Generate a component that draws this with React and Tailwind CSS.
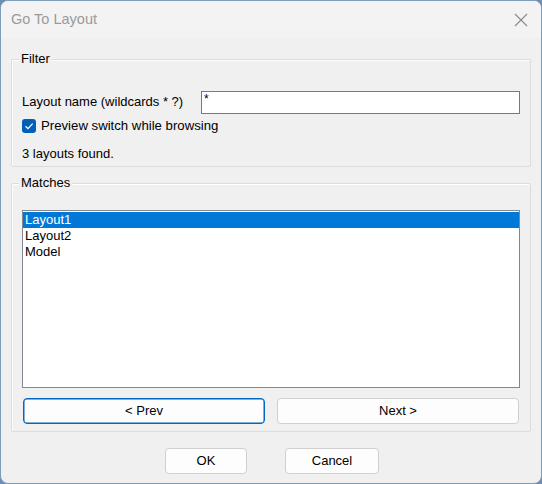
import React, { useState } from 'react';

const items = ['Layout1', 'Layout2', 'Model'];

const GroupBox = ({ label, className, children }) => (
  <div className={`relative border border-[#dcdcdc] rounded-[2px] shadow-[inset_1px_1px_0_#fff] ${className}`}>
    <span className="absolute left-[7px] -top-[9px] px-[2px] bg-[#f0f0f0] leading-[16px]">{label}</span>
    {children}
  </div>
);

const Button = ({ children, focused, className }) => (
  <button
    className={`h-[26px] rounded-[4px] bg-[#fdfdfd] text-[13px] text-black border ${
      focused ? 'border-[#0067c0] shadow-[inset_0_0_0_0.5px_#0067c0]' : 'border-[#d0d0d0]'
    } ${className}`}
  >
    {children}
  </button>
);

export default function App() {
  const [selected, setSelected] = useState(0);

  return (
    <div className="w-[542px] h-[484px] bg-[#6d8eb0] font-['Liberation_Sans',Arial,sans-serif] text-[13px] text-black">
      <div className="w-full h-full rounded-[8px] border border-[#7f9cba] bg-[#f0f0f0] flex flex-col overflow-hidden">
        {/* title bar */}
        <div className="h-[37px] flex items-center justify-between pl-[10px] pr-[13px] bg-[#f3f3f3]">
          <span className="text-[14.5px] text-[#9a9a9a] pt-[1px]">Go To Layout</span>
          <svg width="14" height="14" viewBox="0 0 14 14" className="text-[#8a8a8a]">
            <path d="M1 1 L13 13 M13 1 L1 13" stroke="currentColor" strokeWidth="1.1" fill="none" />
          </svg>
        </div>

        <div className="px-[10px] pt-[21px]">
          <GroupBox label="Filter" className="h-[108px] px-[10px] pt-[31px]">
            <div className="flex items-center h-[22px]">
              <span className="w-[179px]">Layout name (wildcards * ?)</span>
              <div className="flex-1 h-[23px] bg-white border border-[#7a7a7a] pl-[2px] leading-[14px] text-[12px]">*</div>
            </div>
            <label className="flex items-center mt-[5px] h-[16px]">
              <span className="w-[14px] h-[14px] rounded-[3px] bg-[#005fb8] flex items-center justify-center">
                <svg width="10" height="10" viewBox="0 0 10 10">
                  <path d="M1.5 5.2 L4 7.6 L8.6 2.6" stroke="#fff" strokeWidth="1.3" fill="none" />
                </svg>
              </span>
              <span className="ml-[5px] text-[13.2px]">Preview switch while browsing</span>
            </label>
            <div className="mt-[10px]">3 layouts found.</div>
          </GroupBox>

          <GroupBox label="Matches" className="mt-[16px] h-[249px] px-[10px] pt-[26px]">
            <div className="h-[178px] bg-white border border-[#828790] py-[1px]">
              {items.map((it, i) => (
                <div
                  key={it}
                  onClick={() => setSelected(i)}
                  className={`h-[16px] leading-[16px] pl-[2px] ${
                    selected === i ? 'bg-[#0078d7] text-white' : ''
                  }`}
                >
                  {it}
                </div>
              ))}
            </div>
            <div className="flex gap-[12px] mt-[10px] pl-[1px] pr-[1px]">
              <Button focused className="flex-1">&lt; Prev</Button>
              <Button className="flex-1">Next &gt;</Button>
            </div>
          </GroupBox>
        </div>

        <div className="flex justify-center gap-[38px] mt-[16px] pl-[2px]">
          <Button className="w-[82px]">OK</Button>
          <Button className="w-[94px]">Cancel</Button>
        </div>
      </div>
    </div>
  );
}
